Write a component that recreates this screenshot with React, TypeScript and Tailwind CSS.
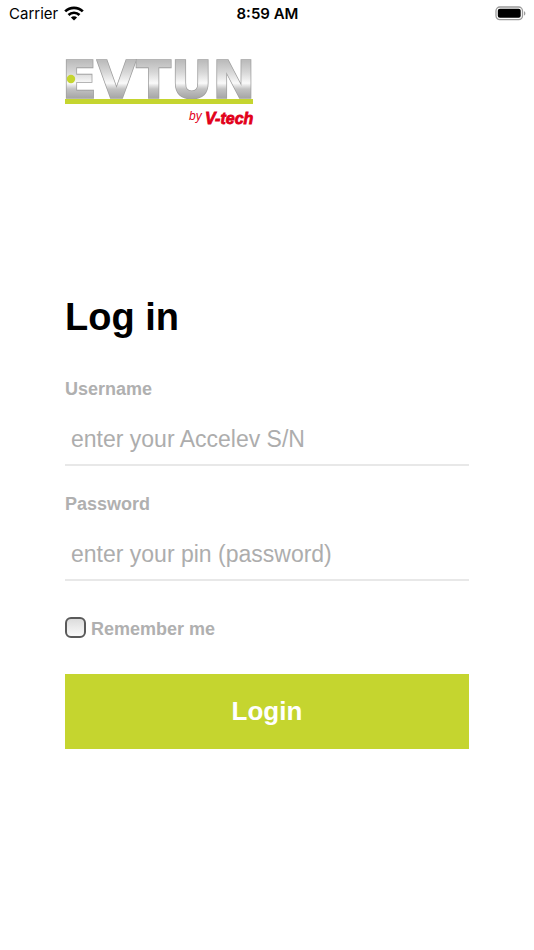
import { useState } from "react";

function StatusBar() {
  return (
    <header className="grid grid-cols-3 items-center h-7 pl-[9px] pr-2 font-['Inter',sans-serif] text-[15px] leading-5 text-black">
      <div className="flex items-center gap-[6px]">
        <span>Carrier</span>
        <svg className="-mt-0.5" width="20" height="15" viewBox="0 0 20 15" fill="none" stroke="#000" strokeWidth="2.7" aria-hidden="true">
          <path d="M1.2 5.4a12.6 12.6 0 0 1 17.6 0" />
          <path d="M4.5 9a7.9 7.9 0 0 1 11 0" />
          <path d="M10 14.6 6.9 11.5a4.4 4.4 0 0 1 6.2 0Z" fill="#000" stroke="none" />
        </svg>
      </div>
      <span className="text-center font-semibold">8:59 AM</span>
      <svg className="justify-self-end -mt-0.5" width="31" height="15" viewBox="0 0 31 15" aria-hidden="true">
        <rect x="1" y="1" width="26.5" height="12.6" rx="3.8" fill="none" stroke="#9b9b9b" strokeWidth="1.3" />
        <rect x="2.8" y="2.8" width="22.9" height="9" rx="2" fill="#000" />
        <path d="M29 5.2c1.8.6 1.8 3.8 0 4.4Z" fill="#9b9b9b" />
      </svg>
    </header>
  );
}

function Logo() {
  return (
    <svg className="overflow-visible" width="188" height="68" viewBox="0 0 188 68" role="img" aria-label="EVTUN by V-tech">
      <defs>
        <linearGradient id="steel" gradientUnits="userSpaceOnUse" x1="0" y1="1" x2="0" y2="38">
          <stop offset="0" stopColor="#bcbcbc" />
          <stop offset="0.3" stopColor="#d6d6d6" />
          <stop offset="0.6" stopColor="#fafafa" />
          <stop offset="0.76" stopColor="#c2c2c2" />
          <stop offset="1" stopColor="#a6a6a6" />
        </linearGradient>
      </defs>
      <text
        x="-3"
        y="38"
        className="font-['DejaVu_Sans',sans-serif] text-[51px] font-bold"
        fill="url(#steel)"
        stroke="#a0a0a0"
        strokeWidth="1.6"
        paintOrder="stroke"
      >
        EVTUN
      </text>
      <circle cx="6" cy="19" r="4.2" fill="#c5d52f" />
      <rect x="0" y="39" width="188" height="5" fill="#c5d52f" />
      <text x="124" y="60" className="font-['Liberation_Sans',sans-serif] text-[12px] italic" fill="#e2001a">
        by
      </text>
      <text
        x="140"
        y="64"
        className="font-['Liberation_Sans',sans-serif] text-[16px] font-bold italic"
        fill="#e2001a"
        stroke="#e2001a"
        strokeWidth="0.8"
      >
        V-tech
      </text>
    </svg>
  );
}

type FieldProps = {
  id: string;
  label: string;
  type: string;
  placeholder: string;
};

function Field({ id, label, type, placeholder }: FieldProps) {
  return (
    <div className="flex flex-col">
      <label htmlFor={id} className="text-[18px] leading-6 font-bold text-[#b0b0b0]">
        {label}
      </label>
      <input
        id={id}
        name={id}
        type={type}
        placeholder={placeholder}
        className="w-full h-[65px] px-[6px] pt-[14px] border-b-2 border-[#e8e8e8] text-[23px] text-black placeholder:text-[#adadad] outline-none"
      />
    </div>
  );
}

export default function App() {
  const [remember, setRemember] = useState(false);

  return (
    <div className="min-h-screen bg-white font-['Liberation_Sans',Arial,sans-serif]">
      <StatusBar />
      <main className="px-[65px] pt-8 pb-16">
        <Logo />
        <form className="flex flex-col pt-[165px]" onSubmit={(e) => e.preventDefault()}>
          <h1 className="text-[38px] leading-[48px] font-bold text-black">Log in</h1>
          <div className="flex flex-col gap-[26px] pt-9">
            <Field id="username" label="Username" type="text" placeholder="enter your Accelev S/N" />
            <Field id="password" label="Password" type="password" placeholder="enter your pin (password)" />
          </div>

          {/* Remember me */}
          <label className="flex items-start gap-[5px] pt-9 text-[18px] leading-6 font-bold text-[#b0b0b0]">
            <input
              type="checkbox"
              name="remember"
              checked={remember}
              onChange={(e) => setRemember(e.target.checked)}
              className="appearance-none size-[21px] rounded-[6px] border-2 border-[#5a5a5a] bg-linear-to-b from-[#dcdcdc] to-[#fafafa] checked:from-[#c5d52f] checked:to-[#c5d52f]"
            />
            Remember me
          </label>

          <button type="submit" className="w-full h-[75px] mt-[33px] bg-[#c5d52f] text-[26px] font-bold text-white">
            Login
          </button>
        </form>
      </main>
    </div>
  );
}
